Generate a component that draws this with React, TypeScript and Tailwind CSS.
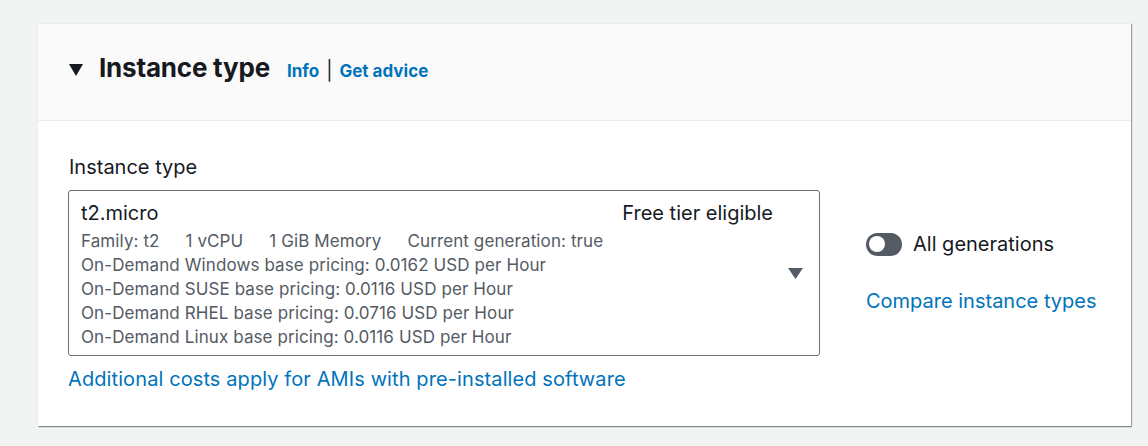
import React from "react";

export default function App() {
  return (
    <div
      className="w-[1148px] h-[446px] bg-[#f2f3f3] pt-[23px] pl-[38px] overflow-hidden"
      style={{ fontFamily: 'Inter, "Open Sans", Arial, sans-serif' }}
    >
      <div className="w-[1093px] h-[403px] bg-white shadow-[1px_1px_1px_0_rgba(0,28,36,0.35),0_1px_1px_0_rgba(0,28,36,0.2)] border-t border-[#eaeded] flex flex-col">
        <div className="h-[97px] bg-[#fafafa] border-b border-[#eaeded] flex items-baseline pl-[31px] pt-[28px]">
          <svg width="14" height="12" viewBox="0 0 14 12" className="mr-[16px] self-start mt-[12px]">
            <polygon points="0,0 14,0 7,12" fill="#16191f" />
          </svg>
          <span className="text-[26px] leading-[32px] font-bold text-[#16191f] tracking-[-0.2px]">Instance type</span>
          <span className="ml-[17px] text-[17px] font-bold text-[#0073bb]">Info</span>
          <span className="mx-[7px] text-[19px] text-[#16191f]">|</span>
          <span className="text-[17px] font-bold text-[#0073bb]">Get advice</span>
        </div>
        <div className="flex pl-[30px] pt-[34px]">
          <div className="w-[752px]">
            <div className="text-[20px] text-[#16191f] leading-[24px] pl-[1px]">Instance type</div>
            <div className="mt-[11px] border border-[#687078] rounded-[3px] h-[166px] pl-[12px] pr-[16px] pt-[9px] flex">
              <div className="flex-1">
                <div className="flex justify-between text-[20px] text-[#16191f] leading-[26px] pr-[31px]">
                  <span>t2.micro</span>
                  <span>Free tier eligible</span>
                </div>
                <div className="text-[17px] text-[#545b64] leading-[24px] mt-[3px] tracking-[0.1px]">
                  <div className="flex gap-[26px]">
                    <span>Family: t2</span>
                    <span>1 vCPU</span>
                    <span>1 GiB Memory</span>
                    <span>Current generation: true</span>
                  </div>
                  <div>On-Demand Windows base pricing: 0.0162 USD per Hour</div>
                  <div>On-Demand SUSE base pricing: 0.0116 USD per Hour</div>
                  <div>On-Demand RHEL base pricing: 0.0716 USD per Hour</div>
                  <div>On-Demand Linux base pricing: 0.0116 USD per Hour</div>
                </div>
              </div>
              <div className="flex items-center -mt-[9px] -ml-[16px]">
                <svg width="15" height="11" viewBox="0 0 15 11">
                  <polygon points="0,0 15,0 7.5,11" fill="#545b64" />
                </svg>
              </div>
            </div>
            <div className="mt-[10px] text-[20px] text-[#0073bb] leading-[26px] tracking-[0.1px]">
              Additional costs apply for AMIs with pre-installed software
            </div>
          </div>
          <div className="ml-[46px] pt-[77px]">
            <div className="flex items-center">
              <div className="w-[36px] h-[23px] rounded-full bg-[#545b64] relative">
                <div className="absolute left-[3px] top-[3.5px] w-[16px] h-[16px] rounded-full bg-white" />
              </div>
              <span className="ml-[11px] text-[20px] text-[#16191f] leading-[24px]">All generations</span>
            </div>
            <div className="mt-[33px] text-[20px] text-[#0073bb] leading-[24px]">Compare instance types</div>
          </div>
        </div>
      </div>
    </div>
  );
}
